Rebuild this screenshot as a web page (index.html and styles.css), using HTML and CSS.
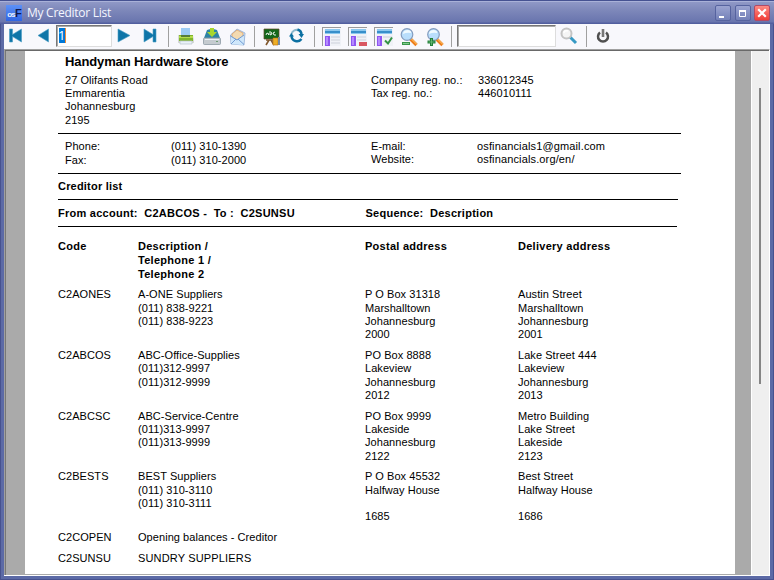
FILE: index.html
```html
<!DOCTYPE html>
<html lang="en">
<head>
<meta charset="utf-8">
<title>My Creditor List</title>
<link rel="stylesheet" href="styles.css">
</head>
<body>
<div class="window">
  <header class="titlebar">
    <div class="logo">os<b>F</b></div>
    <h1>My Creditor List</h1>
    <div class="controls">
      <div class="control"><svg width="14" height="14"><path d="M3 10h5v2H3z" fill="#fff"/></svg></div>
      <div class="control"><svg width="14" height="14"><path d="M3.500 4.500h6v6h-6z" fill="none" stroke="#fff"/><path d="M3 4h7v2H3z" fill="#fff"/></svg></div>
      <div class="control close"><svg width="14" height="14"><path d="M3.200 3.200l7.600 7.600M10.800 3.200l-7.600 7.600" stroke="#fff" stroke-width="2.200"/></svg></div>
    </div>
  </header>
  <nav class="toolbar">
    <svg class="i-first" width="14" height="16" viewBox="0 0 14 16"><path d="M.5 1h3v5.500L12.500 1v13L3.500 8.500V14h-3z" fill="#0f75a8" stroke="#4b9dc4" stroke-width=".6"/></svg>
    <svg class="i-prev" width="14" height="16" viewBox="0 0 14 16"><path d="M1 7.500L11.500 1v13z" fill="#0f75a8" stroke="#4b9dc4" stroke-width=".6"/></svg>
    <div class="page-field"><span>1</span></div>
    <svg class="i-next" width="14" height="16" viewBox="0 0 14 16"><path d="M13 7.500L1 1v13z" fill="#0f75a8" stroke="#4b9dc4" stroke-width=".6"/></svg>
    <svg class="i-last" width="14" height="16" viewBox="0 0 14 16"><path d="M13 1h-3v5.500L1 1v13l9-5.500V14h3z" fill="#0f75a8" stroke="#4b9dc4" stroke-width=".6"/></svg>
    <i class="sep s1"></i>
    <svg class="i-print" width="18" height="18" viewBox="0 0 18 18">
      <path d="M4 0h9v8H4z" fill="#9ccbf5"/><path d="M1 7h15l1 5v3H1z" fill="#d5d9d5"/><path d="M2 7h14v6H2z" fill="#80b52d"/><path d="M2 8h14v2H2z" fill="#b4dc4c"/><path d="M4 7h9v2H4z" fill="#567d39"/><path d="M3 13h12v3H3z" fill="#e9f1f8" stroke="#b8c2cb" stroke-width=".7"/>
    </svg>
    <svg class="i-save" width="18" height="18" viewBox="0 0 18 18">
      <path d="M4 2q5-2 10 0l3 8H1z" fill="#2e83a5"/><path d="M7 0h4v4h3L9 9 4 4h3z" fill="#a7d72d"/><rect x=".5" y="10" width="17" height="6.500" rx="1" fill="#c5cbd0" stroke="#8d9ba5" stroke-width=".8"/><path d="M2 11h14v1H2z" fill="#edf1f4"/><path d="M13 13h2v1h-2z" fill="#6b9d72"/>
    </svg>
    <svg class="i-mail" width="18" height="18" viewBox="0 0 18 18">
      <path d="M1.500 7L8 1l8 4-1 12-13-1z" fill="#cce4f9" stroke="#8eabd4" stroke-width=".8"/><path d="M3 6l5-4 6 3v4l-6 3-5-3z" fill="#f3dab1" stroke="#dfa165" stroke-width=".8"/><path d="M2 8v8l12 1 1-10-7 5z" fill="#cfe7fb"/><path d="M1.500 8L8 12l7-5M2 16l5-5M15 16.500L9 11" fill="none" stroke="#719bd3"/>
    </svg>
    <i class="sep s2"></i>
    <svg class="i-board" width="18" height="18" viewBox="0 0 18 18">
      <path d="M1 1h15v10H1z" fill="#13671b" stroke="#63472b" stroke-width=".7"/><path d="M3 7l1-2 2 1-1 1M7 3v4l2-1-1-2M12 4l-2 1 1 2h2" fill="none" stroke="#fff" stroke-width=".9"/><path d="M3 12h9M6 12l-3 5M8 12l3 5" stroke="#80572d" stroke-width="1.600"/><path d="M10 10h5v7h-5z" fill="#edae27" stroke="#b56e16" stroke-width=".6"/><path d="M15 9h2v8h-2z" fill="#748ba6"/>
    </svg>
    <svg class="i-refresh" width="16" height="16" viewBox="0 0 16 16">
      <path d="M2.500 6A5.200 5.200 0 0 1 10 2.500" fill="none" stroke="#8db9ce" stroke-width="2"/><path d="M8.500 1.500Q12.500 2.500 12.500 7" fill="none" stroke="#0c70a2" stroke-width="2.500"/><path d="M9.500 6h5.500l-2.500 4z" fill="#0c70a2"/><path d="M2.500 7.500c0 6 7 7.500 10 3.500" fill="none" stroke="#0c70a2" stroke-width="2.400"/><path d="M0 8.500h5L2.300 5z" fill="#0c70a2"/>
    </svg>
    <i class="sep s3"></i>
    <svg class="i-view" width="20" height="19" viewBox="0 0 20 19">
      <path d="M0 0h19v1H1v18H0z" fill="#9b9b9b"/><path d="M2 2h17v17H2z" fill="#f0f2f7"/><path d="M3 2h15v5H3z" fill="#8cc8ee"/><path d="M3 4h15v2H3z" fill="#388fca"/><path d="M3 9h5v10H3z" fill="#8f55f2"/><path d="M4 10h2v8H4z" fill="#b48aff"/><path d="M9 10h9M9 13h9M9 16h9" stroke="#cdd1da"/>
    </svg>
    <svg class="i-view" width="20" height="19" viewBox="0 0 20 19">
      <path d="M0 0h19v1H1v18H0z" fill="#9b9b9b"/><path d="M2 2h17v17H2z" fill="#f0f2f7"/><path d="M3 2h15v5H3z" fill="#8cc8ee"/><path d="M3 4h15v2H3z" fill="#388fca"/><path d="M3 9h5v10H3z" fill="#8f55f2"/><path d="M4 10h2v8H4z" fill="#b48aff"/><path d="M9 10h9M9 13h9" stroke="#cdd1da"/><path d="M11 15h8v4h-8z" fill="#d95761"/>
    </svg>
    <svg class="i-view" width="20" height="19" viewBox="0 0 20 19">
      <path d="M0 0h19v1H1v18H0z" fill="#9b9b9b"/><path d="M2 2h17v17H2z" fill="#f0f2f7"/><path d="M3 2h15v5H3z" fill="#8cc8ee"/><path d="M3 4h15v2H3z" fill="#388fca"/><path d="M3 9h5v10H3z" fill="#8f55f2"/><path d="M4 10h2v8H4z" fill="#b48aff"/><path d="M9 10h9" stroke="#cdd1da"/><path d="M11 13.500l3 3 4-6" fill="none" stroke="#339345" stroke-width="2"/>
    </svg>
    <svg class="i-zoom" width="18" height="19" viewBox="0 0 18 19">
      <path d="M10.500 11l6 6" stroke="#ee7d1b" stroke-width="3.200"/><path d="M11 10.500l6 6" stroke="#ffd173"/><circle cx="7" cy="6.500" r="5.800" fill="#b9defc" stroke="#849cbe" stroke-width="1.200"/><path d="M3 6q0-4 5-4 4 1 3 3-4-1-8 1" fill="#f0faff"/><path d="M2 14h8v3H2z" fill="#39974a"/><path d="M3 15.500h6" stroke="#82cb8e"/>
    </svg>
    <svg class="i-zoom" width="18" height="19" viewBox="0 0 18 19">
      <path d="M10.500 11l6 6" stroke="#ee7d1b" stroke-width="3.200"/><path d="M11 10.500l6 6" stroke="#ffd173"/><circle cx="7.500" cy="6.500" r="5.800" fill="#b9defc" stroke="#849cbe" stroke-width="1.200"/><path d="M3 6q0-4 5-4 4 1 3 3-4-1-8 1" fill="#f0faff"/><path d="M5.500 10v8M1.500 14h8" stroke="#23803a" stroke-width="3"/><path d="M5.500 11v6M2.500 14h6" stroke="#70bd79" stroke-width=".8"/>
    </svg>
    <i class="sep s4"></i>
    <div class="search-field"></div>
    <svg class="i-search" width="18" height="18" viewBox="0 0 18 18">
      <path d="M10 10l6 6" stroke="#3699c4" stroke-width="3"/><circle cx="6.500" cy="6.500" r="5" fill="#f5f5f5" stroke="#c4c4c4" stroke-width="2"/><path d="M4 6q0-3 4-2" fill="none" stroke="#fff" stroke-width="1.500"/>
    </svg>
    <i class="sep s5"></i>
    <svg class="i-power" width="14" height="16" viewBox="0 0 14 16">
      <path d="M4 4.500a5 5 0 1 0 6 0" fill="none" stroke="#505050" stroke-width="2.500"/><path d="M7 1v8" stroke="#777" stroke-width="2.600"/>
    </svg>
  </nav>
  <main class="viewer">
    <article class="report">
      <section class="company">
        <h2>Handyman Hardware Store</h2>
        <div class="company-grid">
          <div>27 Olifants Road<br>Emmarentia<br>Johannesburg<br>2195</div>
          <div>Company reg. no.:<br>Tax reg. no.:</div>
          <div>336012345<br>446010111</div>
        </div>
      </section>
      <section class="contact">
        <div>Phone:<br>Fax:</div>
        <div>(011) 310-1390<br>(011) 310-2000</div>
        <div class="tight">E-mail:<br>Website:</div>
        <div class="tight wide">osfinancials1@gmail.com<br>osfinancials.org/en/</div>
      </section>
      <h3>Creditor list</h3>
      <section class="filter">
        <div class="from"><span>From account:</span><span>C2ABCOS -</span><span>To :</span><span class="last">C2SUNSU</span></div>
        <div class="sequence"><span>Sequence:</span><span>Description</span></div>
      </section>
      <section class="row head"><div>Code</div><div>Description /<br>Telephone 1 /<br>Telephone 2</div><div>Postal address</div><div>Delivery address</div></section>
      <section class="row"><div>C2AONES</div><div>A-ONE Suppliers<br>(011) 838-9221<br>(011) 838-9223</div><div>P O Box 31318<br>Marshalltown<br>Johannesburg<br>2000</div><div>Austin Street<br>Marshalltown<br>Johannesburg<br>2001</div></section>
      <section class="row"><div>C2ABCOS</div><div>ABC-Office-Supplies<br>(011)312-9997<br>(011)312-9999</div><div>PO Box 8888<br>Lakeview<br>Johannesburg<br>2012</div><div>Lake Street 444<br>Lakeview<br>Johannesburg<br>2013</div></section>
      <section class="row"><div>C2ABCSC</div><div>ABC-Service-Centre<br>(011)313-9997<br>(011)313-9999</div><div>PO Box 9999<br>Lakeside<br>Johannesburg<br>2122</div><div>Metro Building<br>Lake Street<br>Lakeside<br>2123</div></section>
      <section class="row"><div>C2BESTS</div><div>BEST Suppliers<br>(011) 310-3110<br>(011) 310-3111</div><div>P O Box 45532<br>Halfway House<br><br>1685</div><div>Best Street<br>Halfway House<br><br>1686</div></section>
      <section class="row short"><div>C2COPEN</div><div>Opening balances - Creditor</div></section>
      <section class="row short"><div>C2SUNSU</div><div class="caps">SUNDRY SUPPLIERS</div></section>
    </article>
    <aside class="scroll"><div class="thumb"></div></aside>
  </main>
</div>
</body>
</html>
```
FILE: styles.css
```css
* { box-sizing: border-box; }
body { margin: 0; overflow: hidden; }
h1, h2, h3 { margin: 0; }
svg { display: block; flex: none; }

.window {
  width: 774px;
  height: 580px;
  display: flex;
  flex-direction: column;
  padding: 0 4px 4px;
  background: #5c6aa6;
  box-shadow: inset 1px 0 #47528f, inset -1px -1px #47528f;
  font-family: "Liberation Sans", Arial, sans-serif;
}

.titlebar {
  flex: none;
  height: 24px;
  margin: 0 -4px;
  padding: 1px 4px 0 6px;
  display: flex;
  align-items: center;
  background: linear-gradient(#465292 0 1px, #a9b1d8 1px 2px, #8f98c6 2px, #7e88ba 10px, #6975ae 22px, #525f9f 23px);
}
.logo {
  width: 16px;
  height: 16px;
  background: linear-gradient(#5d91f7, #2f65e3);
  color: #e9f1ff;
  font: bold 8px/16px "Liberation Sans", sans-serif;
  letter-spacing: -.8px;
  text-align: center;
}
.logo b { color: #10194b; font-size: 11px; }
.titlebar h1 {
  margin-left: 5px;
  color: #f4f6ff;
  font: 12px/16px "Open Sans", "Noto Sans", sans-serif;
  letter-spacing: -.27px;
}
.controls { margin-left: auto; display: flex; gap: 3.5px; }
.control {
  width: 16px;
  height: 16px;
  border: 1px solid #56639f;
  border-radius: 2px;
  background: linear-gradient(#9ba4d1, #7481b8);
}
.control.close { background: linear-gradient(#ff8a83, #ef3d37); border-color: #b14a67; }

.toolbar {
  flex: none;
  height: 25px;
  display: flex;
  align-items: flex-start;
  background: #f8f8fc;
}
.toolbar > * { flex: none; }
.sep { width: 1px; height: 21px; margin-top: 2px; background: #a0a0a0; }
.i-first { margin: 4px 0 0 5px; }
.i-prev { margin: 4px 0 0 14px; }
.page-field {
  width: 56px;
  height: 22px;
  margin: 1px 0 0 5px;
  border: 1px solid #a0a0a0;
  border-color: #777 #ddd #ddd #777;
  box-shadow: inset 1px 1px #aaa;
  padding: 2px 0 0 2px;
  background: #fff;
}
.page-field span {
  display: block;
  width: 7px;
  height: 15px;
  background: #0078d7;
  border-right: 1px solid #ef8c3b;
  color: #fff;
  font: 13px/15px "Open Sans", sans-serif;
  text-indent: -1px;
}
.i-next { margin: 4px 0 0 5px; }
.i-last { margin: 4px 0 0 12px; }
.s1 { margin-left: 11px; }
.i-print { margin: 4px 0 0 8px; }
.i-save { margin: 4px 0 0 8px; }
.i-mail { margin: 4px 0 0 8px; }
.s2 { margin-left: 7px; }
.i-board { margin: 4px 0 0 8px; }
.i-refresh { margin: 4px 0 0 8px; }
.s3 { margin-left: 9px; }
.i-view { margin: 3px 0 0 7px; }
.i-view + .i-view { margin-left: 6px; }
.i-zoom { margin: 4px 0 0 6px; }
.i-zoom + .i-zoom { margin-left: 8px; }
.s4 { margin-left: 7px; }
.search-field {
  width: 99px;
  height: 22px;
  margin: 1px 0 0 5px;
  border: 1px solid;
  border-color: #777 #ddd #ddd #777;
  box-shadow: inset 1px 1px #aaa;
  background: #fff;
}
.i-search { margin: 3px 0 0 4px; }
.s5 { margin-left: 8px; }
.i-power { margin: 4px 0 0 9px; }

.viewer {
  flex: 1;
  min-height: 0;
  display: flex;
  padding-left: 1px;
  border: 1px solid #fff;
  border-width: 1px 1px 1px 0;
  border-top-color: #a0a0a0;
  background: #aaa;
  box-shadow: inset 1px 0 #a0a0a0, inset 0 1px #696969, inset 2px 0 #777;
}
.report {
  width: 710px;
  height: 523px;
  margin: 1px 0 0 20px;
  padding-left: 33px;
  overflow: hidden;
  background: #fff;
  color: #000;
  font-size: 11px;
  line-height: 13.33px;
  letter-spacing: .06px;
}
.scroll {
  width: 18px;
  margin: 1px 0 0 16px;
  padding: 37px 0 0 7px;
  border: solid #fff;
  border-width: 0 0 0 1px;
  background: #efefef;
}
.thumb { width: 2px; height: 296px; background: #858585; }

.company { width: 623px; height: 83px; padding: 3px 0 0 7px; border-bottom: 1px solid #000; }
h2 { font-size: 13px; line-height: 15px; letter-spacing: -.12px; }
.company-grid { display: grid; grid-template-columns: 306px 107px 1fr; margin-top: 4.700px; }
.contact {
  width: 623px;
  height: 40px;
  padding: 6px 0 0 7px;
  display: grid;
  grid-template-columns: 106px 200px 106px 1fr;
  border-bottom: 1px solid #000;
}
.contact > :not(.tight) { margin-top: -1px; line-height: 14px; }
.contact .wide { letter-spacing: .14px; }
h3 { width: 620px; height: 26px; padding-top: 5.500px; border-bottom: 1px solid #000; font-size: 11px; line-height: 13.33px; letter-spacing: .2px; }
.filter {
  width: 619px;
  height: 27px;
  padding-top: 6.500px;
  display: grid;
  grid-template-columns: 307.500px 1fr;
  border-bottom: 1px solid #000;
  font-weight: bold;
  letter-spacing: .26px;
}
.from, .sequence { display: flex; gap: 6.500px; }
.last { letter-spacing: .25px; }

.row { display: grid; grid-template-columns: 80px 227px 153px 1fr; height: 60.670px; }
.row.head { height: 48px; padding-top: 11.500px; margin-bottom: 13.300px; font-weight: bold; line-height: 14px; letter-spacing: .27px; }
.row.short { height: 21px; }
.caps { letter-spacing: .16px; }
```
